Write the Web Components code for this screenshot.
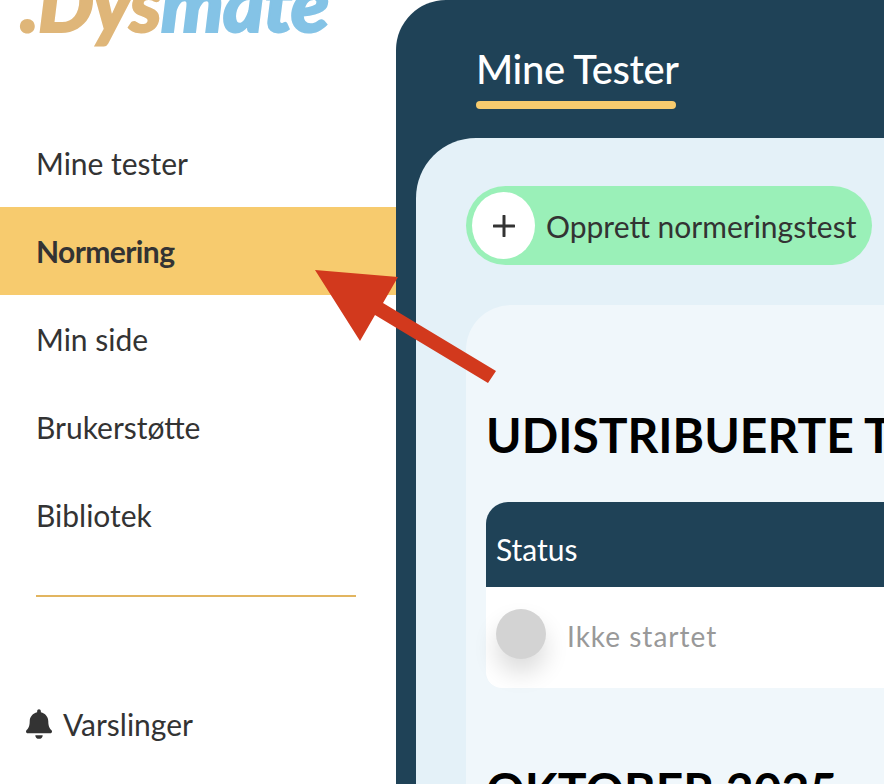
<!DOCTYPE html>
<html lang="no">
<head>
<meta charset="utf-8">
<title>Dysmate</title>
<style>
    html, body { margin: 0; height: 784px; overflow: hidden; background: #fff; }
    body { font-family: Lato, "Open Sans", sans-serif; color: #333; position: relative; }
    dys-app { height: 784px; }
</style>
</head>
<body>
<dys-app>
    <dys-sidebar slot="side">
        <nav-item>Mine tester</nav-item>
        <nav-item active>Normering</nav-item>
        <nav-item>Min side</nav-item>
        <nav-item>Brukerstøtte</nav-item>
        <nav-item>Bibliotek</nav-item>
    </dys-sidebar>
    <dys-main slot="main">
        <create-button>Opprett normeringstest</create-button>
        <test-section title="UDISTRIBUERTE TESTER"></test-section>
    </dys-main>
</dys-app>
<red-arrow></red-arrow>

<script>
class DysApp extends HTMLElement {
    constructor() {
        super();
        this.attachShadow({ mode: 'open' });
        this.shadowRoot.innerHTML = `
            <style>
                :host { display: flex; width: 884px; overflow: hidden; }
            </style>
            <slot name="side"></slot>
            <slot name="main"></slot>
        `;
    }
}

class DysSidebar extends HTMLElement {
    constructor() {
        super();
        this.attachShadow({ mode: 'open' });
        this.shadowRoot.innerHTML = `
            <style>
                :host { display: flex; flex-direction: column; width: 396px; flex: none; height: 784px; overflow: hidden; }
                .logo {
                    height: 119px;
                    padding-left: 20px;
                    box-sizing: border-box;
                    font: italic 900 79px/1 Lato, sans-serif;
                    letter-spacing: -1px;
                    margin-top: -38px;
                    height: 157px;
                    white-space: nowrap;
                    -webkit-text-stroke: 2px currentColor;
                }
                .dys { color: #dfb679; }
                .mate { color: #84c3e6; }
                hr {
                    border: 0;
                    height: 2px;
                    background: #e2b560;
                    margin: 36px 40px 0 36px;
                }
                .alerts {
                    display: flex;
                    align-items: center;
                    gap: 11px;
                    margin: 109px 0 0 26px;
                    font-size: 30px;
                    line-height: 36px;
                    color: #333;
                }
                svg { width: 26px; height: 30px; fill: #333; }
            </style>
            <div class="logo"><span class="dys">.Dys</span><span class="mate">mate</span></div>
            <slot></slot>
            <hr>
            <div class="alerts">
                <svg viewBox="0 0 448 512"><path d="M224 512c35.32 0 63.97-28.65 63.97-64H160.03c0 35.35 28.65 64 63.97 64zm215.39-149.71c-19.32-20.76-55.47-51.99-55.47-154.29 0-77.7-54.48-139.9-127.94-155.16V32c0-17.67-14.32-32-31.98-32s-31.98 14.33-31.98 32v20.84C118.56 68.1 64.08 130.3 64.08 208c0 102.3-36.15 133.53-55.47 154.29-6 6.45-8.66 14.16-8.61 21.71.11 16.4 12.98 32 32.1 32h383.8c19.12 0 32-15.6 32.1-32 .05-7.55-2.61-15.27-8.61-21.71z"/></svg>
                <span>Varslinger</span>
            </div>
        `;
    }
}

class NavItem extends HTMLElement {
    constructor() {
        super();
        this.attachShadow({ mode: 'open' });
        this.shadowRoot.innerHTML = `
            <style>
                :host {
                    display: flex;
                    align-items: center;
                    height: 88px;
                    padding-left: 36px;
                    font-size: 30px;
                    color: #333;
                }
                :host([active]) { background: #f7cb6e; font-weight: 700; letter-spacing: -0.6px; }
            </style>
            <slot></slot>
        `;
    }
}

class DysMain extends HTMLElement {
    constructor() {
        super();
        this.attachShadow({ mode: 'open' });
        this.shadowRoot.innerHTML = `
            <style>
                :host {
                    display: flex;
                    flex-direction: column;
                    flex: none;
                    width: 488px;
                    height: 784px;
                    box-sizing: border-box;
                    background: #1f4257;
                    border-top-left-radius: 50px;
                    padding-left: 20px;
                    overflow: hidden;
                }
                .tabs { height: 138px; flex: none; padding: 43px 0 0 60px; box-sizing: border-box; }
                .tab {
                    display: inline-block;
                    color: #fff;
                    font-size: 40px;
                    font-weight: 500;
                    line-height: 52px;
                    letter-spacing: -0.4px;
                }
                .tab::after {
                    content: '';
                    display: block;
                    width: 200px;
                    height: 8px;
                    margin-top: 6px;
                    border-radius: 4px;
                    background: #f7cb6e;
                }
                .panel {
                    flex: 1;
                    width: 620px;
                    box-sizing: border-box;
                    background: #e4f1f8;
                    border-top-left-radius: 60px;
                    padding: 48px 0 0 50px;
                }
            </style>
            <div class="tabs"><div class="tab">Mine Tester</div></div>
            <div class="panel"><slot></slot></div>
        `;
    }
}

class CreateButton extends HTMLElement {
    constructor() {
        super();
        this.attachShadow({ mode: 'open' });
        this.shadowRoot.innerHTML = `
            <style>
                :host {
                    display: flex;
                    align-items: center;
                    gap: 11px;
                    width: 406px;
                    height: 79px;
                    box-sizing: border-box;
                    padding-left: 6px;
                    border-radius: 40px;
                    background: #9af0b8;
                    color: #333;
                    font-size: 30px;
                    white-space: nowrap;
                }
                .plus {
                    display: flex;
                    align-items: center;
                    justify-content: center;
                    width: 63px;
                    height: 67px;
                    border-radius: 50%;
                    background: #fff;
                }
                svg { width: 22px; height: 22px; stroke: #333; stroke-width: 3; stroke-linecap: round; }
            </style>
            <span class="plus"><svg viewBox="0 0 22 22"><path d="M11 1v20M1 11h20"/></svg></span>
            <slot></slot>
        `;
    }
}

class TestSection extends HTMLElement {
    constructor() {
        super();
        this.attachShadow({ mode: 'open' });
        this.shadowRoot.innerHTML = `
            <style>
                :host {
                    display: block;
                    width: 600px;
                    margin-top: 40px;
                    height: 600px;
                    box-sizing: border-box;
                    padding: 101px 0 0 20px;
                    background: #f0f7fb;
                    border-top-left-radius: 45px;
                }
                h2 {
                    margin: 0;
                    font-size: 48px;
                    font-weight: 700;
                    line-height: 58px;
                    color: #000;
                    white-space: nowrap;
                }
                .table { margin-top: 38px; border-radius: 22px 0 22px 0; }
                .head {
                    height: 85px;
                    box-sizing: border-box;
                    padding: 27px 0 0 10px;
                    background: #1f4257;
                    color: #fff;
                    font-size: 30px;
                    line-height: 40px;
                    border-top-left-radius: 22px;
                }
                .row {
                    display: flex;
                    align-items: flex-start;
                    gap: 21px;
                    height: 101px;
                    box-sizing: border-box;
                    padding: 22px 0 0 10px;
                    background: #fff;
                    border-bottom-left-radius: 16px;
                    color: #999;
                    font-size: 28px;
                    letter-spacing: 1px;
                    line-height: 54px;
                }
                .dot {
                    width: 50px;
                    height: 50px;
                    border-radius: 50%;
                    background: #d3d3d3;
                    box-shadow: 0 14px 24px rgba(0, 0, 0, 0.14);
                    flex: none;
                }
                .next { margin: 73px 0 0; }
            </style>
            <h2>${this.getAttribute('title')}</h2>
            <div class="table">
                <div class="head">Status</div>
                <div class="row"><span class="dot"></span><span>Ikke startet</span></div>
            </div>
            <h2 class="next">OKTOBER 2025</h2>
        `;
    }
}

class RedArrow extends HTMLElement {
    constructor() {
        super();
        this.attachShadow({ mode: 'open' });
        this.shadowRoot.innerHTML = `
            <style>
                :host { position: absolute; left: 0; top: 0; width: 884px; height: 784px; pointer-events: none; }
                svg { display: block; }
            </style>
            <svg width="884" height="784" viewBox="0 0 884 784">
                <path fill="#d2391d" d="M315 270L398 277L383 303L496 371L488 383L375 315L360 341Z"/>
            </svg>
        `;
    }
}

customElements.define('dys-app', DysApp);
customElements.define('dys-sidebar', DysSidebar);
customElements.define('nav-item', NavItem);
customElements.define('dys-main', DysMain);
customElements.define('create-button', CreateButton);
customElements.define('test-section', TestSection);
customElements.define('red-arrow', RedArrow);
</script>
</body>
</html>
